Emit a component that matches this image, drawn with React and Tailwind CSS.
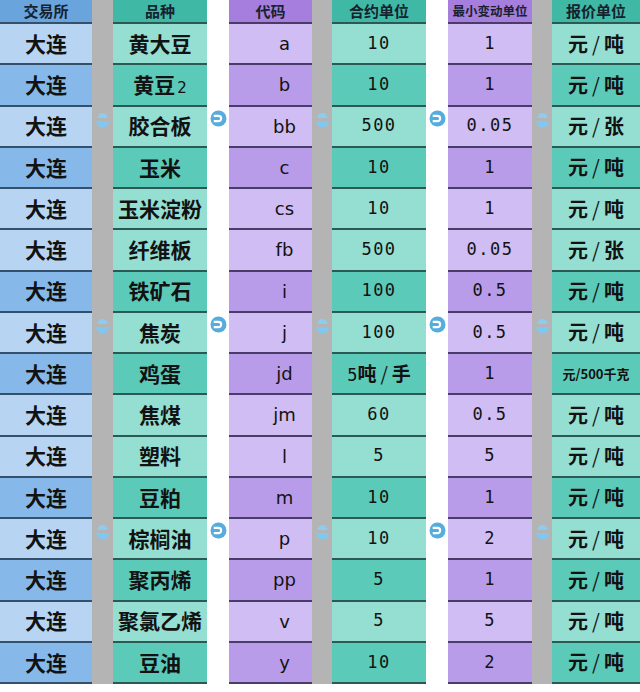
import React from 'react';

const rows = [
  ['黄大豆', 'a', '10', '1', '元/吨'],
  ['黄豆2', 'b', '10', '1', '元/吨'],
  ['胶合板', 'bb', '500', '0.05', '元/张'],
  ['玉米', 'c', '10', '1', '元/吨'],
  ['玉米淀粉', 'cs', '10', '1', '元/吨'],
  ['纤维板', 'fb', '500', '0.05', '元/张'],
  ['铁矿石', 'i', '100', '0.5', '元/吨'],
  ['焦炭', 'j', '100', '0.5', '元/吨'],
  ['鸡蛋', 'jd', '5吨/手', '1', '元/500千克'],
  ['焦煤', 'jm', '60', '0.5', '元/吨'],
  ['塑料', 'l', '5', '5', '元/吨'],
  ['豆粕', 'm', '10', '1', '元/吨'],
  ['棕榈油', 'p', '10', '2', '元/吨'],
  ['聚丙烯', 'pp', '5', '1', '元/吨'],
  ['聚氯乙烯', 'v', '5', '5', '元/吨'],
  ['豆油', 'y', '10', '2', '元/吨'],
];

// rows drawn in the darker shade
const darkRows = [1, 3, 6, 8, 11, 13, 15];
const iconRows = [2, 7, 12];

const cjk = "font-['Noto_Sans_CJK_SC','Noto_Sans',sans-serif]";
const mono = "font-['DejaVu_Sans_Mono','Liberation_Mono',monospace]";
const latin = "font-['DejaVu_Sans','Noto_Sans',sans-serif]";

const themes = {
  blue: {
    head: 'bg-[#6aa4dd]',
    light: 'bg-[#b7d5f2]',
    dark: 'bg-[#86b9ea]',
    line: 'border-[#35506a]',
    lineBg: 'bg-[#35506a]',
  },
  teal: {
    head: 'bg-[#3fb9a5]',
    light: 'bg-[#95ded2]',
    dark: 'bg-[#5ccab8]',
    line: 'border-[#2d5954]',
    lineBg: 'bg-[#2d5954]',
  },
  purple: {
    head: 'bg-[#a67ede]',
    light: 'bg-[#d0bdf3]',
    dark: 'bg-[#b89ce9]',
    line: 'border-[#4a3c68]',
    lineBg: 'bg-[#4a3c68]',
  },
};

function Column({ width, theme, title, titleClass, render, cellClass }) {
  const t = themes[theme];
  return (
    <div className={`${width} flex flex-col shrink-0`}>
      <div className={`h-[22px] ${t.head} flex items-center justify-center font-bold text-[#16222f] ${cjk} ${titleClass}`}>
        {title}
      </div>
      {rows.map((r, i) => (
        <div
          key={i}
          className={`h-[41.25px] border-t-2 ${t.line} ${darkRows.includes(i) ? t.dark : t.light} flex items-center justify-center text-[#121212] ${cellClass}`}
        >
          {render(r, i)}
        </div>
      ))}
      <div className={`h-[2px] ${t.lineBg}`} />
    </div>
  );
}

function SplitIcon() {
  return (
    <svg width="15" height="20" viewBox="0 0 15 20">
      <path d="M2.5 8 A5 5 0 0 1 12.5 8 Z" fill="#8ccdef" />
      <path d="M1 11 A6.5 6.5 0 0 0 14 11 Z" fill="#80c8ef" />
    </svg>
  );
}

function ArrowIcon() {
  return (
    <svg width="17" height="17" viewBox="0 0 16 16">
      <circle cx="8" cy="8" r="7.5" fill="#55acdd" />
      <path d="M3.5 5.5h4.5a2.5 2.5 0 0 1 0 5H3.5" stroke="#fff" strokeWidth="2" fill="none" />
    </svg>
  );
}

function Gap({ width, gray }) {
  return (
    <div className={`${width} h-[684px] shrink-0 flex flex-col ${gray ? 'bg-[#b4b4b4]' : 'bg-white'}`}>
      <div className="h-[22px]" />
      {rows.map((_, i) => (
        <div key={i} className="h-[41.25px] flex justify-center items-start pt-[5px]">
          {iconRows.includes(i) && (gray ? <SplitIcon /> : <ArrowIcon />)}
        </div>
      ))}
    </div>
  );
}

// "元/吨" style units: the slash sits with wide spacing, like a full-width glyph
function Unit({ text }) {
  const [a, b] = text.split('/');
  return (
    <span className="whitespace-nowrap">
      {a}
      <span className="mx-[4px] font-normal">/</span>
      {b}
    </span>
  );
}

export default function App() {
  return (
    <div className="w-[640px] h-[692px] bg-white overflow-hidden">
      <div className="flex">
        <Column
          width="w-[92px]"
          theme="blue"
          title="交易所"
          titleClass="text-[15px]"
          cellClass={`text-[21px] font-bold ${cjk}`}
          render={() => '大连'}
        />
        <Gap width="w-[21px]" gray />
        <Column
          width="w-[94px]"
          theme="teal"
          title="品种"
          titleClass="text-[15px]"
          cellClass={`text-[21px] font-bold whitespace-nowrap ${cjk}`}
          render={(r) =>
            r[0] === '黄豆2' ? (
              <span>
                黄豆<span className={`text-[15px] font-normal ml-[2px] ${latin}`}>2</span>
              </span>
            ) : (
              r[0]
            )
          }
        />
        <Gap width="w-[22px]" />
        <Column
          width="w-[83px]"
          theme="purple"
          title="代码"
          titleClass="text-[15px]"
          cellClass={`text-[18px] pl-[28px] ${latin}`}
          render={(r) => r[1]}
        />
        <Gap width="w-[20px]" gray />
        <Column
          width="w-[94px]"
          theme="teal"
          title="合约单位"
          titleClass="text-[15px]"
          cellClass="text-[17px]"
          render={(r) =>
            r[2] === '5吨/手' ? (
              <span className={`text-[19px] font-bold whitespace-nowrap ${cjk}`}>
                <span className={`font-normal text-[17px] ${mono}`}>5</span>吨
                <span className="mx-[4px] font-normal">/</span>手
              </span>
            ) : (
              <span className={`tracking-[1.5px] ${mono}`}>{r[2]}</span>
            )
          }
        />
        <Gap width="w-[22px]" />
        <Column
          width="w-[84px]"
          theme="purple"
          title="最小变动单位"
          titleClass="text-[12.5px]"
          cellClass={`text-[17px] tracking-[1.5px] ${mono}`}
          render={(r) => r[3]}
        />
        <Gap width="w-[20px]" gray />
        <Column
          width="w-[88px]"
          theme="teal"
          title="报价单位"
          titleClass="text-[15px]"
          cellClass={`font-bold ${cjk}`}
          render={(r) =>
            r[4] === '元/500千克' ? (
              <span className="text-[13px] whitespace-nowrap">元/500千克</span>
            ) : (
              <span className="text-[20px]">
                <Unit text={r[4]} />
              </span>
            )
          }
        />
      </div>
    </div>
  );
}
